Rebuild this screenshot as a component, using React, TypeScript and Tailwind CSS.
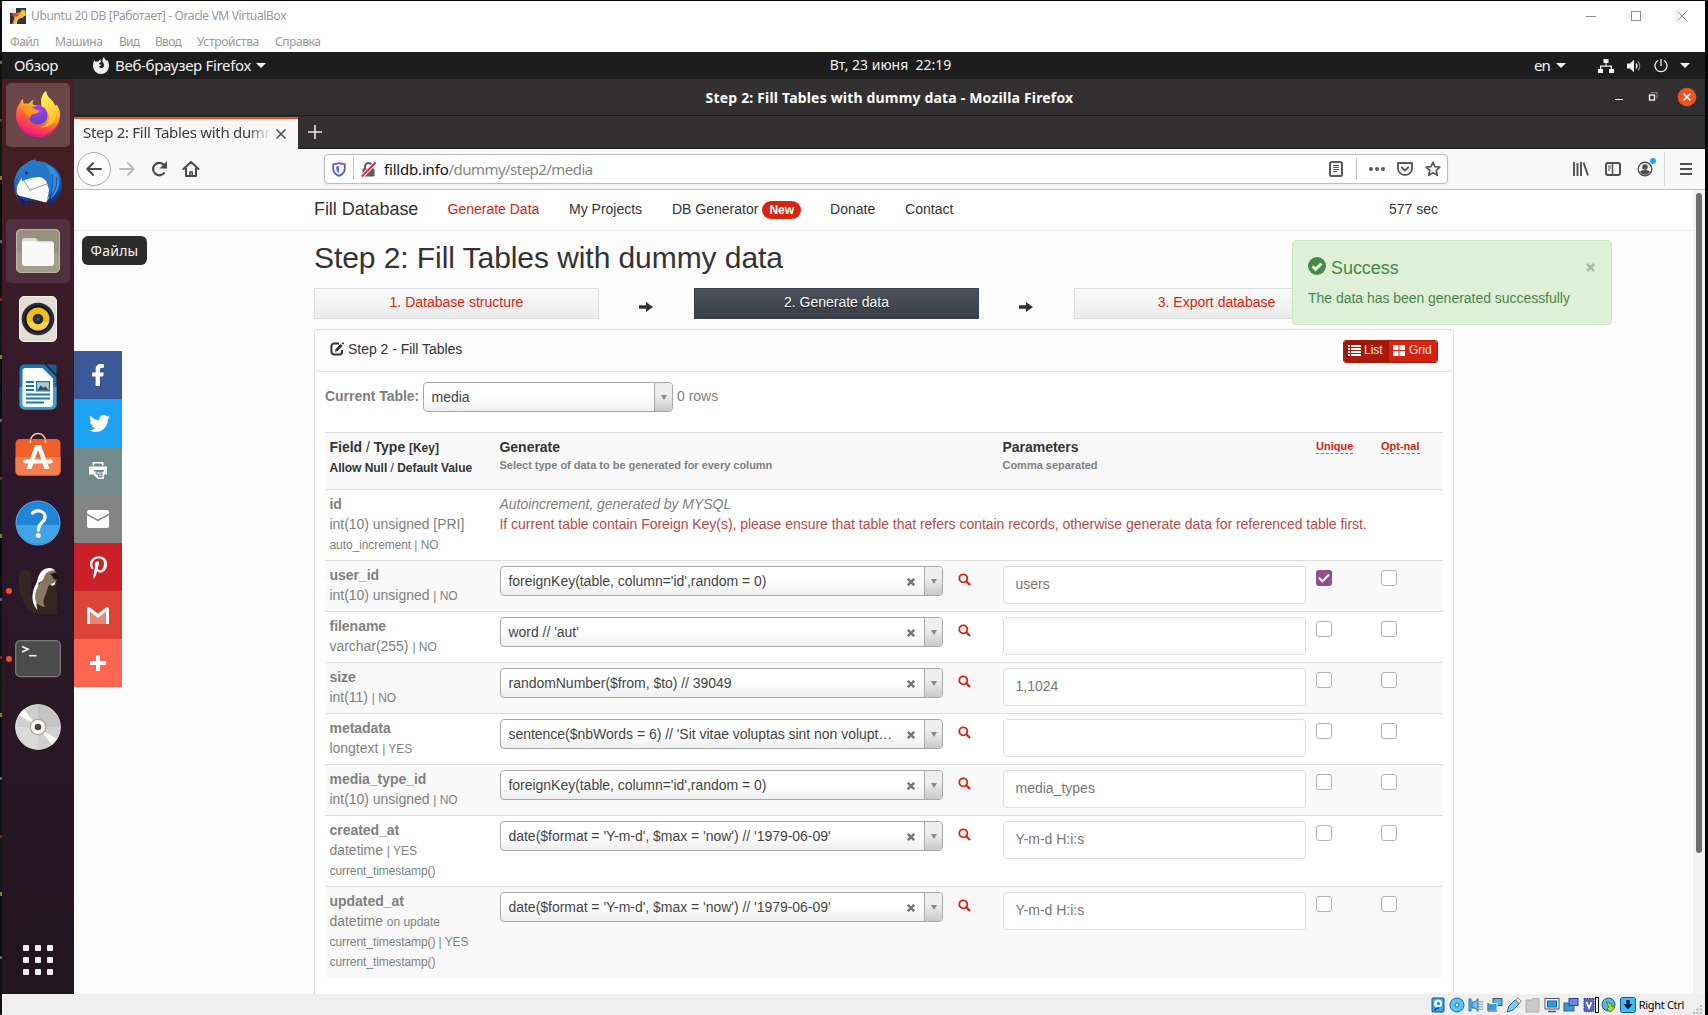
import type { ReactNode } from "react";
import { FaFacebookF, FaPinterestP, FaTwitter } from "react-icons/fa";

/* ---------- dock icons ---------- */

const FirefoxIcon = () => (
  <svg className="-mt-[3px]" width="46" height="48" viewBox="0 0 46 48">
    <defs>
      <linearGradient id="fxBody" x1="0.75" y1="0.1" x2="0.35" y2="1">
        <stop offset="0" stopColor="#fff14f" />
        <stop offset="0.35" stopColor="#ffb02a" />
        <stop offset="0.62" stopColor="#ff5f3b" />
        <stop offset="1" stopColor="#ee1282" />
      </linearGradient>
      <radialGradient id="fxGlobe" cx="0.5" cy="0.2" r="0.9">
        <stop offset="0" stopColor="#a540ee" />
        <stop offset="1" stopColor="#4f49bd" />
      </radialGradient>
      <linearGradient id="fxFlame" x1="0.3" y1="0" x2="0.7" y2="1">
        <stop offset="0" stopColor="#fff657" />
        <stop offset="1" stopColor="#ffc02d" />
      </linearGradient>
    </defs>
    <path d="M8 9c0 2 .3 3.500 1 4.600 1.500-.3 3.500-.3 5 .1 1-2 2.800-3.300 4.500-4-.8 2-1 3.500-.6 5L27 16c-1-5-1-11 4-15 .5 4 2.500 6.500 6 9.500 2 2 2.800 4 2.500 6l1.700-2C44.500 18 45 22 45 25c0 12-10 22-22 22S1 37 1 25c0-5 1.500-9 4-12 .4-1.500 1.500-3 3-4z" fill="url(#fxBody)" />
    <path d="M27 18c-2-6-1-13 4-17 .5 4 3 7 6 10 5 5 6 13 2 21-3 4-9 6-13 5 6-2 9-7 8-12-1-4-4-6-7-7z" fill="url(#fxFlame)" opacity="0.85" />
    <circle cx="23" cy="25" r="9.600" fill="url(#fxGlobe)" />
    <path d="M6.500 19c4-2 8-3 11-1.500 2.500 1 5 3 7 3-1 3-4 3.200-6.500 3.700-2 .4-3 1.800-2.600 4.300C13 26 9 21 6.500 19z" fill="#ff9a1f" />
    <path d="M3 32c4 8 12 12.500 20 12.500 9 0 17-5 20.500-12C41 41 33 47 23 47 13 47 5.500 40.500 3 32z" fill="#e5127f" opacity="0.55" />
  </svg>
);

const ThunderbirdIcon = () => (
  <svg className="mt-px" width="50" height="50" viewBox="0 0 50 50">
    <defs>
      <linearGradient id="tbBody" x1="0.3" y1="0" x2="0.6" y2="1">
        <stop offset="0" stopColor="#2f8fd8" />
        <stop offset="0.5" stopColor="#1f5cb4" />
        <stop offset="1" stopColor="#1b2467" />
      </linearGradient>
    </defs>
    <path d="M14 4c4-3 7-3.500 9-3 0 .8-.5 1.200-1 1.500 6-.5 10 .5 13 2.500 9 4 14 11 14 20 0 8-3 14-8 18 0 2-3 4-6 5 1-3 1-4 1-6H12c2 2 2 4 2 6C6 44 1 36 1 26 1 16 6 8 14 4z" fill="url(#tbBody)" />
    <path d="M3.500 36L4 27l5-9 23-.5L38 27l-2 12-3 4.500z" fill="#fafafa" />
    <path d="M9 19l8 12 18-6.500" fill="none" stroke="#8d8d8d" strokeWidth="0.900" />
    <path d="M14 4c4-3 7-3.500 9-3-.2.900-.5 1.200-1 1.500 9 0 16 5 18 14 2 8-1 17-6 25 1-6 3-10 1-14-1-6-5-9.500-9-9.500l-8 1-9 3c-1-7 0-13 5-18z" fill="#2577cb" />
    <path d="M32 5c9 3 15.500 11 14.500 20-1 6-4 11-9 15 2-6 2-10 1-15 0-8-1.500-14-6.500-20z" fill="#3590dc" />
    <path d="M39 15c2 8 1 15-3 22M43.500 18c1 7-1 13-5 19" stroke="#1d5cb0" strokeWidth="1.200" fill="none" />
    <circle cx="13.500" cy="14" r="1.600" fill="#152a66" />
    <path d="M3 33c2 4 6 7 9 9l2 6C8 45 4 39 3 33z" fill="#1b1f63" />
  </svg>
);

const FilesIcon = () => (
  <svg width="46" height="46" viewBox="0 0 46 46">
    <rect x="1" y="1" width="44" height="44" rx="5" fill="#a39d8c" />
    <rect x="1" y="1" width="44" height="24" rx="5" fill="#979180" />
    <rect x="1.500" y="1.500" width="43" height="43" rx="4.500" fill="none" stroke="#bdb8a8" />
    <path d="M7 13a3 3 0 0 1 3-3h9c2 0 3 1 4 3h13a3 3 0 0 1 3 3v4H7z" fill="#dedbd3" />
    <path d="M7 15a2 2 0 0 1 2-2h11c1.500 0 2 .5 3 1.500h13.500a2.500 2.500 0 0 1 2.500 2.500V35a3 3 0 0 1-3 3H10a3 3 0 0 1-3-3z" fill="#f9f9f7" />
  </svg>
);

const RhythmboxIcon = () => (
  <svg width="38" height="46" viewBox="0 0 38 46">
    <rect x="0.500" y="0.500" width="37" height="45" rx="4.500" fill="#e4dfd6" stroke="#f3f0ea" />
    <circle cx="19" cy="23" r="16.300" fill="#2a2d38" />
    <circle cx="19" cy="23" r="13.500" fill="#101217" />
    <circle cx="19" cy="23" r="11.500" fill="#f2bd1c" />
    <path d="M8 26a11.500 11.500 0 0 0 22 0z" fill="#f8d04c" />
    <circle cx="19" cy="23" r="5.300" fill="#26282b" />
    <circle cx="19" cy="23" r="2" fill="#4a4c50" />
  </svg>
);

const WriterIcon = () => (
  <svg width="38" height="46" viewBox="0 0 38 46">
    <path d="M5 .5h20.500L37.500 13v27.500a5 5 0 0 1-5 5H5.500a5 5 0 0 1-5-5v-35a5 5 0 0 1 5-5z" fill="#1878ad" />
    <path d="M.5 23h37v17.500a5 5 0 0 1-5 5h-27a5 5 0 0 1-5-5z" fill="#3ba2ce" />
    <path d="M27.500.5H35a2.500 2.500 0 0 1 2.500 2.500v7.500z" fill="#0b6596" />
    <path d="M6 4h17.500L34 14.500V40a3 3 0 0 1-3 3H6.500a3 3 0 0 1-3-3V6.500A2.500 2.500 0 0 1 6 4z" fill="#fcfdfe" />
    <path d="M7 18h8M7 22h8M7 26h8M7 30.500h24M7 34.500h24M7 38.500h18" stroke="#1878ad" strokeWidth="1.800" />
    <rect x="17" y="17" width="14" height="10.500" fill="#1878ad" />
    <rect x="18.200" y="18.200" width="11.600" height="8.100" fill="#9fd0ea" />
    <path d="M18.200 26.300l3.600-5 2.500 2.500 2-1.500 3.500 4z" fill="#4d4d4d" />
    <circle cx="28" cy="20" r="1.700" fill="#e7c52d" />
  </svg>
);

const SoftwareIcon = () => (
  <svg className="-mt-[3px]" width="46" height="44" viewBox="0 0 46 44">
    <path d="M15.500 11V9a7.500 7.500 0 0 1 15 0v2" fill="none" stroke="#f3c89c" strokeWidth="1.600" />
    <rect x="0.500" y="7" width="45" height="36.500" rx="4.500" fill="#f0602a" />
    <path d="M.5 25h45v14a4.500 4.500 0 0 1-4.500 4.500H5A4.500 4.500 0 0 1 .5 39z" fill="#f47e4d" />
    <path d="M15.500 8v3M30.500 8v3" stroke="#f3c89c" strokeWidth="1.600" />
    <path d="M20 13h6l8.500 24h-5L23 18l-6.500 19h-5z" fill="#fff" />
    <path d="M10.500 29.500h25" stroke="#fff" strokeWidth="4.200" strokeLinecap="round" />
  </svg>
);

const HelpIcon = () => (
  <svg width="46" height="46" viewBox="0 0 46 46">
    <circle cx="23" cy="23" r="22" fill="#2084d8" stroke="#5ab2ef" />
    <path d="M1.200 25a22 22 0 0 0 43.600 0z" fill="#43a3e6" />
    <path d="M17.500 13c2-2 5-2.600 7.500-2 3.500.8 5.500 3.500 5 7-.5 4-6.500 5.500-6.500 11v1" fill="none" stroke="#fff" strokeWidth="3.300" strokeLinecap="round" />
    <circle cx="23.300" cy="35.500" r="2.500" fill="#fff" />
  </svg>
);

const BeaverIcon = () => (
  <svg width="40" height="48" viewBox="0 0 40 48">
    <path d="M3.500 4C8 1.500 13 4 13.500 9.500 14 16 12 20 13 27c1 7 5 13 9 16l2 4c-5 .8-11-1-15-6C3 33 0 20 1 10c.3-2.500 1-5 2.500-6z" fill="#35271f" />
    <path d="M22 12c5-2 11-1 14 2 3 6 3.500 13 3 20l-.500 8 1 5H22c-4-5-6-9-6-15 0-8 1-15 6-20z" fill="#35271f" />
    <path d="M21 12c-4 5-7 13-6.500 20 .3 4 2 8 5 11-1.500-6-1.500-11 .5-18z" fill="#fff" />
    <path d="M23 15c-4 5-6 10-6 16 .5 5 4 8 10 9-3-6-1-9 1-13 1-4 2-8 4-11z" fill="#8b7868" />
    <path d="M21 13c1-6 4-10 9-11 4-.8 7 1 8.500 4l.5 6c-1 5-5 7-10 6z" fill="#86725f" />
    <path d="M19 16c.5-7 4-14 11-15 3-.4 5.500.6 7 2.500-6-.5-9 2-10.500 5.500C26 12 23 16 19 16z" fill="#fff" />
    <path d="M32 7l6-1.500c1.500 2 1.500 5 .5 7.500l-3-1c0-2-1.500-4-3.500-5z" fill="#1d1512" />
    <path d="M33 17l4.500-2-.5 2.500-3 1.500z" fill="#fff" />
  </svg>
);

const TerminalIcon = () => (
  <svg width="46" height="38" viewBox="0 0 46 38">
    <rect x="0.700" y="0.700" width="44.600" height="36" rx="4.500" fill="#4b4b4b" stroke="#7c7c7c" strokeWidth="1.200" />
    <path d="M7 6.500l6 2.700-6 2.700" fill="none" stroke="#f4f4f4" strokeWidth="1.600" />
    <path d="M14 15.700h7.500" stroke="#f4f4f4" strokeWidth="1.600" />
  </svg>
);

const DiscIcon = () => (
  <svg width="46" height="46" viewBox="0 0 46 46">
    <circle cx="23" cy="23" r="22.300" fill="#cfcfcf" stroke="#ececec" />
    <path d="M23 23V1a22 22 0 0 1 22 22z" fill="#c4c4c4" />
    <path d="M23 23L4 11a22 22 0 0 1 5-6z" fill="#fbfbfb" />
    <path d="M23 23l19 12a22 22 0 0 1-5 6z" fill="#fbfbfb" />
    <path d="M23 23v22A22 22 0 0 1 1 23z" fill="#dadada" />
    <circle cx="23" cy="23" r="7.700" fill="#fafafa" stroke="#b0a894" strokeWidth="1.300" />
    <circle cx="23" cy="23" r="3.300" fill="#474747" />
  </svg>
);

function DockItem({ children, active, hover, dot }: { children: ReactNode; active?: boolean; hover?: boolean; dot?: boolean }) {
  return (
    <div className="flex h-[68px] items-center">
      <div className="flex w-1 justify-start overflow-visible">
        {dot && <span className="ml-[4px] size-[6px] shrink-0 rounded-full bg-[#e95420]" />}
      </div>
      <div
        className={
          "flex size-16 items-center justify-center rounded-[5px] " +
          (active ? "bg-[#6a464a]" : hover ? "bg-[#50303f]" : "")
        }
      >
        {children}
      </div>
    </div>
  );
}

function Dock() {
  return (
    <aside className="flex w-[72px] shrink-0 flex-col bg-linear-to-b from-[#4a1f23] via-[#2f182c] via-45% to-[#22151d] pt-[2px]">
      <DockItem active dot><FirefoxIcon /></DockItem>
      <DockItem><ThunderbirdIcon /></DockItem>
      <DockItem hover><FilesIcon /></DockItem>
      <DockItem><RhythmboxIcon /></DockItem>
      <DockItem><WriterIcon /></DockItem>
      <DockItem><SoftwareIcon /></DockItem>
      <DockItem><HelpIcon /></DockItem>
      <DockItem dot><BeaverIcon /></DockItem>
      <DockItem dot><TerminalIcon /></DockItem>
      <DockItem><DiscIcon /></DockItem>
      <div className="mt-auto mb-[19px] ml-[21px] grid w-[30px] grid-cols-3 gap-1.5">
        {Array.from({ length: 9 }, (_, i) => (
          <span key={i} className="size-1.5 rounded-[1px] bg-[#f0efee]" />
        ))}
      </div>
    </aside>
  );
}

/* ---------- window chrome ---------- */

function HostTitleBar() {
  return (
    <div className="flex h-[29px] shrink-0 items-center bg-white font-['Noto_Sans',sans-serif] text-xs text-[#999]">
      <svg className="ml-2" width="16" height="16" viewBox="0 0 16 16">
        <rect width="16" height="16" fill="#2c3440" />
        <path d="M5 16c0-6 2-8 6-8 3 0 4-2 4-5l-3-2c-1 3-3 4-6 4L2 4l1 4c2 1 1 5-1 8z" fill="#ee8a1d" />
        <path d="M7 16c0-4 2-6 5-6l4-3-1-5-3 1-2 4-5 3-1 6z" fill="#f6c14b" />
        <rect width="6" height="5" fill="#e8e8e8" />
        <path d="M2 5l5 0 1 3-5 1z" fill="#d2401e" />
      </svg>
      <span className="ml-[5px] tracking-[-0.35px]">Ubuntu 20 DB [Работает] - Oracle VM VirtualBox</span>
      <svg className="mr-[18px] ml-auto" width="102" height="12" viewBox="0 0 102 12" fill="none" stroke="#8f8f8f">
        <path d="M1 6.500h10" />
        <rect x="46.500" y="1.500" width="9" height="9" />
        <path d="M92.500 1.500l9 9M101.500 1.500l-9 9" />
      </svg>
    </div>
  );
}

function HostMenuBar() {
  return (
    <div className="flex h-[22px] shrink-0 items-center bg-white pt-px pl-2 font-['Noto_Sans',sans-serif] text-xs text-[#999]">
      <span className="w-[45px] tracking-[-0.6px]">Файл</span>
      <span className="w-16 tracking-[-0.38px]">Машина</span>
      <span className="w-9 tracking-[-0.8px]">Вид</span>
      <span className="w-[42px] tracking-[-0.7px]">Ввод</span>
      <span className="w-[78px] tracking-[-0.3px]">Устройства</span>
      <span className="tracking-[-0.43px]">Справка</span>
    </div>
  );
}

const Caret = () => (
  <svg width="10" height="5" viewBox="0 0 10 5">
    <path d="M0 0h10L5 5z" fill="#f2f2f2" />
  </svg>
);

function GnomeBar() {
  return (
    <div className="grid h-[27px] shrink-0 grid-cols-3 items-center bg-[#1d1d1d] font-['Noto_Sans',sans-serif] text-[15px] text-[#f2f2f2]">
      <div className="flex items-center pl-3">
        <span className="w-[78px] tracking-[-0.35px]">Обзор</span>
        <svg width="18" height="18" viewBox="0 0 18 18">
          <path d="M2.500 3c.2 1 .6 1.500 1 1.800.8-.4 2-.4 3-.2C7 3.500 8 2.500 8.600 2.300c-.2 1.200.1 2 .6 2.700-.8.8-2.400 1-2.600 2 1 .6 2 .3 2.800.8-.6 1.200-1.800 1-2.400 1.700C8 11.800 11 11.500 11.800 9.500c.7-2-.4-3.800-1.300-4.800C10 2.900 10.800 1.200 12 0c.3 1.800 1.500 2.600 2.600 3.800.3-.2.4-.6.4-1C16.500 4.500 17 7 17 9A8 8 0 0 1 1 9c0-2.500.5-4.500 1.500-6z" fill="#ededed" />
        </svg>
        <span className="ml-[5px] tracking-[-0.32px]">Веб-браузер Firefox</span>
        <span className="ml-[5px]"><Caret /></span>
      </div>
      <div className="pl-[74px] text-center text-sm">
        <span className="relative top-[-1px] whitespace-pre">Вт, 23 июня  22:19</span>
      </div>
      <div className="flex items-center justify-end pr-[15px]">
        <span className="tracking-[-0.9px]">en</span>
        <span className="ml-[6px]"><Caret /></span>
        <svg className="ml-8" width="16" height="14" viewBox="0 0 16 14" fill="#f2f2f2">
          <path d="M5.500 0h5v4h-2v2.500H14V10h2v4h-5v-4h1.700V7.700H3.300V10H5v4H0v-4h2V6.500h5.500V4h-2z" />
        </svg>
        <svg className="ml-3" width="16" height="14" viewBox="0 0 16 14">
          <path d="M1 4.500h3L8 .8v12.400L4 9.500H1z" fill="#f2f2f2" />
          <path d="M10 4.500a4 4 0 0 1 0 5" stroke="#f2f2f2" strokeWidth="1.300" fill="none" />
          <path d="M12 2.500a7 7 0 0 1 0 9" stroke="#8a8a8a" strokeWidth="1.300" fill="none" />
        </svg>
        <svg className="ml-3" width="14" height="14" viewBox="0 0 14 14" fill="none" stroke="#f2f2f2" strokeWidth="1.300">
          <path d="M7 0v7M4 1.500a6 6 0 1 0 6 0" />
        </svg>
        <span className="ml-3"><Caret /></span>
      </div>
    </div>
  );
}

function FirefoxTitle() {
  return (
    <div className="grid h-[37px] shrink-0 grid-cols-[1fr_auto_1fr] items-center border-b border-[#1b1b1b] bg-[#333031] text-sm font-bold text-white">
      <span />
      <span className="pt-px tracking-[0.18px]">Step 2: Fill Tables with dummy data - Mozilla Firefox</span>
      <svg className="mr-2 ml-auto" width="84" height="20" viewBox="0 0 84 20" fill="none">
        <path d="M2 12.500h8" stroke="#fff" />
        <rect x="36.500" y="8" width="5" height="5" stroke="#fff" strokeWidth="1.300" />
        <path d="M38 5.500h6v6" stroke="#8c8c8c" />
        <circle cx="74" cy="10" r="9.300" fill="#e95420" />
        <path d="M70.500 6.500l7 7M77.500 6.500l-7 7" stroke="#fff" strokeWidth="1.500" />
      </svg>
    </div>
  );
}

function TabStrip() {
  return (
    <div className="flex h-[33px] shrink-0 border-b border-[#1b1b1b] bg-[#333031] pt-px">
      <div className="-mb-px flex w-56 items-center border-t-2 border-[#e95420] bg-[#f8f8f8] pl-[9px] text-[15px] text-[#3b3b3b]">
        <span className="relative -top-0.5 w-[188px] overflow-hidden mask-r-from-88% mask-r-to-100% tracking-[-0.3px] whitespace-nowrap">
          Step 2: Fill Tables with dummy
        </span>
        <svg className="ml-[5px]" width="10" height="10" viewBox="0 0 10 10" stroke="#4a4a4a" strokeWidth="1.500">
          <path d="M.5.5l9 9M9.500.5l-9 9" />
        </svg>
      </div>
      <svg className="mt-[8px] ml-[10px]" width="14" height="14" viewBox="0 0 14 14" stroke="#e6e6e6" strokeWidth="1.600">
        <path d="M7 0v14M0 7h14" />
      </svg>
    </div>
  );
}

function NavToolbar() {
  return (
    <div className="flex h-[41px] shrink-0 items-center border-b border-[#bfbfbf] bg-[#f8f8f8] pl-[3px]">
      <span className="flex size-[34px] items-center justify-center rounded-full border border-[#aaa] bg-[#fcfcfc]">
        <svg width="16" height="14" viewBox="0 0 16 14" fill="none" stroke="#4a4a4a" strokeWidth="2" strokeLinecap="round" strokeLinejoin="round">
          <path d="M15 7H1.500M7 1.200L1.300 7 7 12.800" />
        </svg>
      </span>
      <svg className="ml-2" width="16" height="14" viewBox="0 0 16 14" fill="none" stroke="#b9b9b9" strokeWidth="2" strokeLinecap="round" strokeLinejoin="round">
        <path d="M1 7h13.500M9 1.200L14.700 7 9 12.800" />
      </svg>
      <svg className="ml-4" width="18" height="16" viewBox="0 0 18 16">
        <path d="M13.500 11.500A6.200 6.200 0 1 1 13 4" fill="none" stroke="#4a4a4a" strokeWidth="2.200" />
        <path d="M16 0v7.500H8.500z" fill="#4a4a4a" />
      </svg>
      <svg className="ml-[13px]" width="18" height="16" viewBox="0 0 18 16" fill="none" stroke="#4a4a4a" strokeWidth="2" strokeLinejoin="round" strokeLinecap="round">
        <path d="M1.500 8L9 1l7.500 7M4 7.500V15h10V7.500" />
        <path d="M7.800 15v-4h2.400v4" strokeWidth="1.500" />
      </svg>

      <div className="ml-[124px] flex h-[30px] w-[1124px] items-center rounded-[4px] border border-[#bcbcbc] bg-white text-[15px] shadow-[0_1px_3px_rgba(0,0,0,0.06)]">
        <svg className="ml-[7px]" width="14" height="15" viewBox="0 0 14 15">
          <defs>
            <linearGradient id="shield" x1="0" y1="0" x2="0" y2="1">
              <stop offset="0" stopColor="#8a4fe8" />
              <stop offset="1" stopColor="#2f63d6" />
            </linearGradient>
          </defs>
          <path d="M7 1.200c2 .8 4 .9 5.800.9v4.400c0 3.500-2.300 6-5.800 7.300C3.500 12.500 1.200 10 1.200 6.500V2.100C3 2.100 5 2 7 1.200z" fill="none" stroke="url(#shield)" strokeWidth="1.900" strokeLinejoin="round" />
          <path d="M6.900 4v7C5.200 10 4.300 8.500 4.300 6.500V4.600c1 0 1.800-.2 2.600-.6z" fill="#4d5cdc" />
        </svg>
        <span className="ml-[7px] h-[22px] w-px bg-[#c0c0c0]" />
        <svg className="ml-[7px]" width="15" height="15" viewBox="0 0 15 15">
          <rect x="1.500" y="6.500" width="12" height="8" rx="1" fill="#5d5d5d" />
          <path d="M4 7V4.500a3.500 3.500 0 0 1 7 0V7" fill="none" stroke="#5d5d5d" strokeWidth="2" />
          <path d="M14.500.5L1 14.500" stroke="#fff" strokeWidth="4" />
          <path d="M14.500.5L.8 14.500" stroke="#e22850" strokeWidth="2" />
        </svg>
        <span className="ml-2 tracking-[-0.19px] text-[#111]">filldb.info</span>
        <span className="tracking-[-0.54px] text-[#858585]">/dummy/step2/media</span>
        <svg className="ml-auto" width="14" height="16" viewBox="0 0 14 16" fill="none" stroke="#5a5a5a">
          <rect x="1" y="1" width="12" height="14" rx="1.500" strokeWidth="2" />
          <path d="M4 4.500h6M4 6.500h6M4 8.500h6M4 10.500h4" />
        </svg>
        <span className="ml-[13px] h-[22px] w-px bg-[#c0c0c0]" />
        <svg className="ml-3" width="16" height="4" viewBox="0 0 16 4" fill="#5a5a5a">
          <circle cx="2" cy="2" r="2" /><circle cx="8" cy="2" r="2" /><circle cx="14" cy="2" r="2" />
        </svg>
        <svg className="ml-3" width="16" height="14" viewBox="0 0 16 14" fill="none" stroke="#5a5a5a" strokeWidth="1.900" strokeLinejoin="round" strokeLinecap="round">
          <path d="M1 1h14v5.500a7 6.500 0 0 1-14 0z" />
          <path d="M4.800 5.500L8 8.500l3.200-3" />
        </svg>
        <svg className="mr-1.5 ml-3" width="16" height="16" viewBox="0 0 16 16" fill="none" stroke="#5a5a5a" strokeWidth="1.800" strokeLinejoin="round">
          <path d="M8 1.300l2 4.400 4.800.5-3.600 3.200 1.100 4.900L8 11.800l-4.300 2.500 1.100-4.900L1.200 6.200 6 5.700z" />
        </svg>
      </div>

      <div className="mr-[13px] ml-auto flex items-center text-[#4f4f4f]">
        <svg width="16" height="14" viewBox="0 0 16 14" stroke="currentColor" strokeWidth="1.900">
          <path d="M1 0v14M4.500 1v13M8 0v14M10.500.5L15 13.500" />
        </svg>
        <svg className="ml-4" width="16" height="14" viewBox="0 0 16 14" fill="none" stroke="currentColor">
          <rect x="1" y="1" width="14" height="12" rx="2" strokeWidth="2" />
          <path d="M7.500 1v12" strokeWidth="1.500" />
          <path d="M3 4h3M3 6h3M3 8h2" />
        </svg>
        <span className="relative ml-4">
          <svg width="16" height="16" viewBox="0 0 16 16">
            <circle cx="8" cy="8" r="6.800" fill="none" stroke="currentColor" strokeWidth="1.400" />
            <circle cx="8" cy="6" r="2.800" fill="currentColor" />
            <path d="M3 11c1.500-2 3-2 5-2s3.500 0 5 2a6 6 0 0 1-10 0z" fill="currentColor" />
          </svg>
          <span className="absolute -top-[3px] -right-[3px] size-1.5 rounded-full bg-[#10aef0]" />
        </span>
        <span className="ml-[11px] h-[34px] w-px bg-[#d8d8d8]" />
        <svg className="ml-[15px]" width="12" height="12" viewBox="0 0 12 12" stroke="currentColor" strokeWidth="2">
          <path d="M0 1h12M0 6h12M0 11h12" />
        </svg>
      </div>
    </div>
  );
}

/* ---------- web page ---------- */

function SiteHeader() {
  return (
    <header className="flex h-[41px] shrink-0 items-center border-b border-[#ececec] bg-white pb-0.5 pl-60 text-[#333]">
      <span className="w-[133.500px] text-lg leading-5 tracking-[-0.06px]">Fill Database</span>
      <span className="w-[121.500px] text-[#d9230f]">Generate Data</span>
      <span className="w-[103px]">My Projects</span>
      <span>DB Generator</span>
      <span className="mt-[2px] mr-[29px] ml-1 rounded-[9px] bg-[#d9230f] px-[7px] text-xs leading-[18px] font-bold text-white">New</span>
      <span className="w-[75px]">Donate</span>
      <span>Contact</span>
      <span className="mr-[255px] ml-auto">577 sec</span>
    </header>
  );
}

const StepArrow = () => (
  <svg className="mt-[13px]" width="14" height="12" viewBox="0 0 14 12">
    <path d="M0 4.200h7V1l7 5-7 5V7.800H0z" fill="#333" />
  </svg>
);

function Steps() {
  const light = "border-[#ddd] bg-linear-to-b from-[#fafafa] to-[#ececec] text-[#d9230f]";
  const dark = "border-[#3a3f49] bg-linear-to-b from-[#4c515c] to-[#3a3e48] text-white text-shadow-[0_1px_1px_rgba(0,0,0,0.7)]";
  const base = "h-[31px] w-[285px] border pt-[3px] text-center leading-5 ";
  return (
    <div className="mt-3 flex w-[1045px]">
      <div className={base + light}>1. Database structure</div>
      <div className="flex flex-1 justify-start pl-10"><StepArrow /></div>
      <div className={base + dark}>2. Generate data</div>
      <div className="flex flex-1 justify-start pl-10"><StepArrow /></div>
      <div className={base + light}>3. Export database</div>
    </div>
  );
}

function Select({ value, width, clearable }: { value: string; width: string; clearable?: boolean }) {
  return (
    <div className={"flex h-[30px] overflow-hidden rounded-[4px] border border-[#a8a8a8] bg-linear-to-b from-white from-50% to-[#eee] leading-7 text-[#444] " + width}>
      <span className="min-w-0 flex-1 truncate pl-[7.500px]">{value}</span>
      {clearable && (
        <svg className="mt-[11px] mr-[9px] ml-[11px] shrink-0" width="8" height="8" viewBox="0 0 8 8" stroke="#777" strokeWidth="2.500">
          <path d="M.8.800l6.400 6.400M7.200.8L.8 7.200" />
        </svg>
      )}
      <span className="flex w-[18px] shrink-0 items-center justify-center border-l border-[#a8a8a8] bg-linear-to-b from-[#eee] from-40% to-[#c9c9c9]">
        <svg width="6" height="5" viewBox="0 0 6 5"><path d="M0 0h6L3 5z" fill="#888" /></svg>
      </span>
    </div>
  );
}

function Checkbox({ checked }: { checked?: boolean }) {
  return checked ? (
    <span className="mt-1 flex size-4 items-center justify-center rounded-[3px] bg-[#924d8b]">
      <svg width="12" height="10" viewBox="0 0 12 10" fill="none" stroke="#fff" strokeWidth="2">
        <path d="M1 4.800L4.500 8.300 11 1.500" />
      </svg>
    </span>
  ) : (
    <span className="mt-1 block size-4 rounded-[3px] border border-[#b3b3b3] bg-white" />
  );
}

const SearchIcon = () => (
  <svg width="13" height="13" viewBox="0 0 13 13" fill="none" stroke="#d9230f">
    <circle cx="5.300" cy="5.300" r="4" strokeWidth="1.800" />
    <path d="M8.300 8.300l3.700 3.700" strokeWidth="2.300" />
  </svg>
);

const columns = "grid grid-cols-[170px_458px_45px_313px_65px_67px] border-t border-[#ddd] ";
const textCell = "px-[4.500px] pt-1 pb-1.5 tracking-[-0.03px] ";

type Field = {
  name: string;
  type: string;
  small: string;
  extra?: string[];
  generate: string;
  params: string;
  unique?: boolean;
};

const fields: Field[] = [
  { name: "user_id", type: "int(10) unsigned", small: "| NO", generate: "foreignKey(table, column='id',random = 0)", params: "users", unique: true },
  { name: "filename", type: "varchar(255)", small: "| NO", generate: "word // 'aut'", params: "" },
  { name: "size", type: "int(11)", small: "| NO", generate: "randomNumber($from, $to) // 39049", params: "1,1024" },
  { name: "metadata", type: "longtext", small: "| YES", generate: "sentence($nbWords = 6) // 'Sit vitae voluptas sint non volupt…", params: "" },
  { name: "media_type_id", type: "int(10) unsigned", small: "| NO", generate: "foreignKey(table, column='id',random = 0)", params: "media_types" },
  { name: "created_at", type: "datetime", small: "| YES", extra: ["current_timestamp()"], generate: "date($format = 'Y-m-d', $max = 'now') // '1979-06-09'", params: "Y-m-d H:i:s" },
  { name: "updated_at", type: "datetime", small: "on update", extra: ["current_timestamp() | YES", "current_timestamp()"], generate: "date($format = 'Y-m-d', $max = 'now') // '1979-06-09'", params: "Y-m-d H:i:s" },
];

function FieldRow({ field, shaded }: { field: Field; shaded: boolean }) {
  return (
    <div className={columns + (shaded ? "bg-[#f9f9f9]" : "bg-white")}>
      <div className={textCell}>
        <div className="font-bold">{field.name}</div>
        <div>
          {field.type} <span className="text-xs leading-none">{field.small}</span>
        </div>
        {field.extra?.map((line) => (
          <div key={line} className="text-xs leading-5 tracking-[-0.08px]"><span className="relative top-px">{line}</span></div>
        ))}
      </div>
      <div className="p-[5px] tracking-[-0.03px]"><Select value={field.generate} width="w-[443px]" clearable /></div>
      <div className="pt-[12px] pl-[5px]"><SearchIcon /></div>
      <div className="p-[5px]">
        <div className="h-[38px] w-[303px] rounded-[4px] border border-[#ddd] bg-white px-[11.500px] leading-[34px] text-[#777]">{field.params}</div>
      </div>
      <div className="p-[5px]"><Checkbox checked={field.unique} /></div>
      <div className="p-[5px]"><Checkbox /></div>
    </div>
  );
}

function FieldTable() {
  const hint = "relative top-px text-[11px] leading-[15px] tracking-[-0.02px]";
  const link = "inline-block border-b border-dashed border-[#2a8fd8] text-[11px] leading-[13px] text-[#d9230f]";
  return (
    <div className="mt-5 text-[#808080]">
      <div className={columns + "h-[57px] bg-[#f9f9f9] font-bold"}>
        <div className={textCell + "text-[#333]"}>
          <div>Field <span className="font-normal">/</span> Type <span className="text-xs leading-none">[Key]</span></div>
          <div className="relative top-px text-xs leading-5">Allow Null <span className="font-normal">/</span> Default Value</div>
        </div>
        <div className={textCell + "col-span-2"}>
          <div className="text-[#333]">Generate</div>
          <div className={hint}>Select type of data to be generated for every column</div>
        </div>
        <div className={textCell}>
          <div className="text-[#333]">Parameters</div>
          <div className={hint}>Comma separated</div>
        </div>
        <div className="pt-0.5 pl-[5px]"><span className={link}>Unique</span></div>
        <div className="pt-0.5 pl-[5px]"><span className={link}>Opt-nal</span></div>
      </div>
      <div className={columns + "bg-white"}>
        <div className={textCell}>
          <div className="font-bold">id</div>
          <div>int(10) unsigned [PRI]</div>
          <div className="relative top-px text-xs leading-5 tracking-[-0.08px]">auto_increment | NO</div>
        </div>
        <div className={textCell + "col-span-5"}>
          <div className="italic">Autoincrement, generated by MYSQL</div>
          <div className="text-[#b94a48]">
            If current table contain Foreign Key(s), please ensure that table that refers contain records, otherwise generate data for referenced table first.
          </div>
        </div>
      </div>
      {fields.map((field, i) => (
        <FieldRow key={field.name} field={field} shaded={i % 2 === 0} />
      ))}
    </div>
  );
}

function Panel() {
  return (
    <section className="mt-[10px] h-[700px] w-[1140px] rounded-[4px] border border-[#ddd] bg-white">
      <div className="flex h-[42px] items-start justify-between rounded-t-[3px] border-b border-[#ddd] bg-[#fcfcfc] pr-[15px] pl-[15px] text-[#333]">
        <div className="flex items-center pt-[9px]">
          <svg width="14" height="14" viewBox="0 0 14 14">
            <path d="M9 1.600H4A2.600 2.600 0 0 0 1.400 4.200v5.600A2.600 2.600 0 0 0 4 12.400h5.500a2.600 2.600 0 0 0 2.600-2.600V8" fill="none" stroke="#333" strokeWidth="2" />
            <path d="M5 9.800l.6-2.700 5-5 2 2-5 5z" fill="#333" />
            <path d="M11.500 1.300l.8-.8a.7.7 0 0 1 1 0l.5.5a.7.700 0 0 1 0 1l-.600.700z" fill="#333" />
          </svg>
          <span className="ml-1 tracking-[-0.03px]">Step 2 - Fill Tables</span>
        </div>
        <div className="mt-[10px] flex h-[23px] overflow-hidden rounded-[3px] border border-[#a91b0c] text-xs text-[#fbe3e0]">
          <span className="flex w-[45px] items-center bg-[#a91b0c] pb-[3px] pl-1 shadow-[inset_0_3px_5px_rgba(0,0,0,0.13)]">
            <svg className="mt-px mr-[3px]" width="13" height="11" viewBox="0 0 13 11" fill="#fff">
              <path d="M0 0h2v2H0zM3 0h10v2H3zM0 3h2v2H0zM3 3h10v2H3zM0 6h2v2H0zM3 6h10v2H3zM0 9h2v2H0zM3 9h10v2H3z" />
            </svg>
            List
          </span>
          <span className="flex w-12 items-center bg-linear-to-b from-[#e02410] to-[#cb210e] pb-[3px] pl-1">
            <svg className="mt-px mr-1 shrink-0" width="12" height="11" viewBox="0 0 12 11" fill="#fff">
              <path d="M0 0h5.500v5H0zM6.500 0H12v5H6.500zM0 6h5.500v5H0zM6.500 6H12v5H6.500z" />
            </svg>
            Grid
          </span>
        </div>
      </div>
      <div className="px-[10px] pt-[10px]">
        <div className="flex items-start leading-7 text-[#808080]">
          <span className="w-[98px] font-bold tracking-[-0.03px]">Current Table:</span>
          <Select value="media" width="w-[250px]" />
          <span className="ml-1">0 rows</span>
        </div>
        <FieldTable />
      </div>
    </section>
  );
}

const shareButtons: { color: string; icon: ReactNode }[] = [
  { color: "bg-[#3b5998]", icon: <FaFacebookF size={22} /> },
  { color: "bg-[#1da1f2]", icon: <span className="pt-px pl-0.5"><FaTwitter size={21} /></span> },
  {
    color: "bg-[#738a8d]",
    icon: (
      <svg width="20" height="20" viewBox="0 0 20 20" fill="#fff">
        <path d="M4.500 1h11v3.500h-1.500v-2h-8v2H4.500z" />
        <path d="M1 5.500h18v8h-3V18H10l-4-3.500v-1H1zM6 9v1.500h1.700V13c0 .8 2.300.3 2.300 1.500V16.500h4.500V10.500H16V9z" fillRule="evenodd" />
        <path d="M8.500 11.500h5v1h-5zM11 13.700h2.500v1H11z" />
      </svg>
    ),
  },
  {
    color: "bg-[#848484]",
    icon: (
      <svg width="22" height="18" viewBox="0 0 22 18" fill="#fff">
        <path d="M2 0h18a2 2 0 0 1 2 2v1.500l-11 6-11-6V2a2 2 0 0 1 2-2z" />
        <path d="M0 5.200l11 6 11-6V16a2 2 0 0 1-2 2H2a2 2 0 0 1-2-2z" />
      </svg>
    ),
  },
  { color: "bg-[#cb2027]", icon: <FaPinterestP size={23} /> },
  {
    color: "bg-[#db4437]",
    icon: (
      <svg width="22" height="17" viewBox="0 0 22 17">
        <path d="M3 3l8 6.500L19 3v14H3z" fill="#fff" opacity="0.350" />
        <path d="M0 2a2 2 0 0 1 3-1.600l8 6.400 8-6.400A2 2 0 0 1 22 2v15h-3V4.500l-8 6.500-8-6.500V17H0z" fill="#fff" />
      </svg>
    ),
  },
  {
    color: "bg-[#ff6550]",
    icon: (
      <svg width="16" height="16" viewBox="0 0 16 16" fill="#fff"><path d="M6 0h4v6h6v4h-6v6H6v-6H0V6h6z" /></svg>
    ),
  },
];

function WebPage() {
  return (
    <div className="relative flex min-h-0 flex-1 overflow-hidden">
      <div className="flex min-w-0 flex-1 flex-col overflow-hidden bg-[#fcfcfc] font-['Liberation_Sans',Arial,sans-serif] text-sm leading-5">
        <SiteHeader />
        <div className="flex min-h-0 flex-1">
          <div className="flex w-60 shrink-0 flex-col">
            <div className="mt-[5px] ml-2 flex h-[29px] w-[65px] items-center justify-center rounded-[6px] bg-[#2b2b2b] font-['Noto_Sans',sans-serif] text-sm tracking-[0.25px] text-[#f2f2f2]">
              Файлы
            </div>
            <div className="mt-[86px] w-12">
              {shareButtons.map((b) => (
                <div key={b.color} className={"flex size-12 items-center justify-center text-white " + b.color}>{b.icon}</div>
              ))}
            </div>
          </div>
          <main>
            <h1 className="mt-[9px] text-[30px] leading-9 tracking-[-0.07px] text-[#333]">Step 2: Fill Tables with dummy data</h1>
            <Steps />
            <Panel />
          </main>
        </div>
      </div>
      <div className="flex w-3 shrink-0 justify-end bg-[#f3f3f3] pt-[3px] pr-[3px]">
        <span className="h-[660px] w-1.5 rounded-full bg-[#6e6e6e]" />
      </div>

      <div className="absolute top-[50px] left-[1218px] h-[85px] w-[320px] rounded-[4px] border border-[#cfe8bd] bg-[#dff0d8] px-[15px] pt-[15px] font-['Liberation_Sans',Arial,sans-serif] text-sm leading-5 text-[#468847]">
        <div className="flex h-5 items-center">
          <svg width="18" height="18" viewBox="0 0 18 18">
            <circle cx="9" cy="9" r="9" fill="#468847" />
            <path d="M4.500 9.300l3 3L13.500 6.500" fill="none" stroke="#dff0d8" strokeWidth="3" />
          </svg>
          <span className="mt-[3px] ml-[5px] text-lg leading-5 tracking-[-0.05px]">Success</span>
          <svg className="mt-[3px] mr-px ml-auto" width="9" height="9" viewBox="0 0 9 9" stroke="#a9bda4" strokeWidth="2.500">
            <path d="M1 1l7 7M8 1L1 8" />
          </svg>
        </div>
        <div className="mt-3 tracking-[-0.03px]">The data has been generated successfully</div>
      </div>
    </div>
  );
}

/* ---------- host status bar ---------- */

const statusIcons: ReactNode[] = [
  <g key="hdd"><rect x="2" y="1" width="12" height="14" rx="1" fill="#3da5ee" stroke="#0c4f94" /><circle cx="8" cy="6.500" r="4" fill="#e8f6ff" /><circle cx="8.500" cy="6.500" r="1.500" fill="#1a6dc0" /><path d="M4 13l5-2.500" stroke="#0c4f94" strokeWidth="1.500" /></g>,
  <g key="cd"><circle cx="8" cy="8" r="7" fill="#5fc3f6" stroke="#17689f" /><circle cx="8" cy="8" r="2" fill="#d8f2ff" stroke="#17689f" /></g>,
  <g key="audio"><path d="M1 2h2v12H1zM4 5h3l3-3.500v13L7 11H4z" fill="#6cc5f2" stroke="#25709c" /><path d="M12 4v10M14.300 4v10" stroke="#a0a7ad" strokeWidth="1.800" strokeDasharray="1.500 1" /></g>,
  <g key="net"><rect x="6" y="1.500" width="9" height="7" fill="#54b4ee" stroke="#555" /><rect x="1" y="6.500" width="9" height="7" fill="#2a9de8" stroke="#eee" /><path d="M1 6v8h9" stroke="#444" fill="none" /></g>,
  <g key="usb"><path d="M1 15l2-6 6-6 4 4-6 6z" fill="#7ccbf3" stroke="#356c96" /><path d="M9.500 3L12 .8 15.200 4 13 6.500z" fill="#eee" stroke="#777" /></g>,
  <g key="shared"><path d="M1 3h6l1-1.500h6V15H1z" fill="#c9c9c9" stroke="#b0b0b0" /></g>,
  <g key="display"><rect x="1" y="1.500" width="14" height="10.500" fill="#e8f6ff" stroke="#555" /><rect x="3.500" y="4" width="9" height="6" fill="#2a9de8" stroke="#0e63b0" /><path d="M4 14.500h8" stroke="#555" strokeWidth="1.500" /></g>,
  <g key="record"><rect x="1" y="6" width="10" height="8" fill="#2a9de8" stroke="#555" /><rect x="6" y="1.500" width="9" height="7" fill="#6f86da" stroke="#32439d" /></g>,
  <g key="cpu"><rect x="2" y="1.500" width="10" height="13" fill="#5767c4" stroke="#283590" strokeDasharray="1.500 1" /><path d="M4.500 5L7 11l2.500-6" stroke="#fff" strokeWidth="1.600" fill="none" /><rect x="13.500" y="0.500" width="3" height="15" fill="#fff" stroke="#000" /></g>,
  <g key="mouse"><circle cx="7.500" cy="7.500" r="6.500" fill="#4fb5ef" stroke="#27597d" /><path d="M5 5l6 2-1 2 4 1-4 5-4-3 2-2z" fill="#a6e22e" stroke="#4c8a12" /></g>,
  <g key="host"><rect x="0.500" y="0.500" width="15" height="15" rx="2" fill="#3fbdf2" stroke="#0e5f95" /><path d="M6.300 3h3.400v4h3L8 12.500 3.300 7h3z" fill="#0b1f55" /></g>,
];

function StatusBar() {
  return (
    <footer className="flex h-[21px] shrink-0 items-center justify-end bg-[#efefef] pt-px font-['Noto_Sans',sans-serif] text-[11px] text-black">
      <div className="flex gap-[3px]">
        {statusIcons.map((icon, i) => (
          <svg key={i} className="overflow-visible" width="16" height="16" viewBox="0 0 16 16">{icon}</svg>
        ))}
      </div>
      <span className="ml-[3px] tracking-[-0.32px]">Right Ctrl</span>
      <svg className="mt-2 mr-[3px] ml-[9px]" width="9" height="9" viewBox="0 0 9 9" fill="#b5b5b5">
        <path d="M7 0h2v2H7zM3.500 3.500h2v2h-2zM7 3.500h2v2H7zM0 7h2v2H0zM3.500 7h2v2h-2zM7 7h2v2H7z" />
      </svg>
    </footer>
  );
}

export default function App() {
  return (
    <div className="flex h-[1015px] w-[1708px] overflow-hidden bg-[#050505] pt-px pr-[3px] leading-normal">
      <div className="w-0.5 shrink-0 bg-[repeating-linear-gradient(180deg,#0b0b0b_0_60px,#54657c_60px_63px,#111_63px_118px,#7c2b22_118px_121px,#0e1a12_121px_175px,#8a7a2c_175px_179px)]" />
      <div className="flex min-w-0 flex-1 flex-col">
        <HostTitleBar />
        <HostMenuBar />
        <GnomeBar />
        <div className="flex min-h-0 flex-1">
          <Dock />
          <div className="flex min-w-0 flex-1 flex-col font-['Noto_Sans',sans-serif]">
            <FirefoxTitle />
            <TabStrip />
            <NavToolbar />
            <WebPage />
          </div>
        </div>
        <StatusBar />
      </div>
    </div>
  );
}
